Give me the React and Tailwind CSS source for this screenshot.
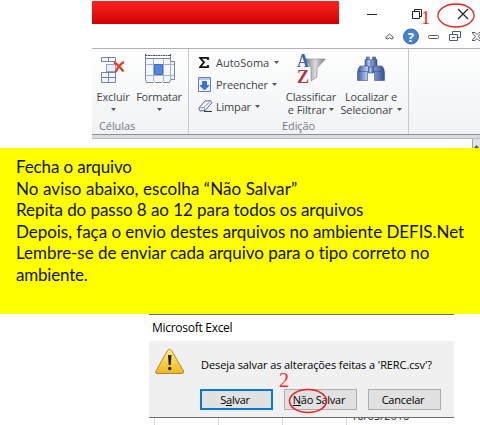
import React from "react";

const ui = "font-['Open_Sans','Noto_Sans',sans-serif]";

function Arrow({ className = "" }) {
  return (
    <svg className={`shrink-0 ${className}`} width="5" height="3" viewBox="0 0 5 3">
      <path d="M0 0h5L2.5 3z" fill="#555" />
    </svg>
  );
}

function DeleteCells() {
  return (
    <svg width="24" height="28" viewBox="0 0 24 28" fill="#f4f7fc" stroke="#7383a3">
      <path d="M.5 5.500V1.500h14v4zM7.500 1.500v4" />
      <path d="M5.500 8.500h9v7h-9z" fill="#e6effb" stroke="#3c4f91" strokeDasharray="1 1" />
      <path d="M.5 16.500h14v10H.5zM7.500 16.500v10M.5 21.500h14" />
      <path d="M13 6c3 2 6 5 9.500 9.500M23 6c-4 2-6 5-8.500 10" fill="none" stroke="#e83b22" strokeWidth="2.200" />
    </svg>
  );
}

function FormatCells() {
  return (
    <svg width="31" height="31" viewBox="0 0 31 31" fill="#f3f6fb" stroke="#7686a8">
      <path d="M1.500 1.500h25M1.500 0v4M26.500 0v4" fill="none" stroke="#465681" strokeDasharray="2 .5" />
      <path d="M1.500 4.500h25v3h4v18h-4l-1 3h-6l-1-1-1 1h-6l-1-1-1 1h-7l-1-3z" />
      <path d="M9.500 5v22M19.500 5v22M26.500 8v18M1 10.500h29M1 21.500h29" stroke="#a5b1c8" />
      <path d="M10.500 10.500h8v10h-8z" fill="#5785dc" stroke="#3f6ac4" />
    </svg>
  );
}

function FillDown() {
  return (
    <svg width="13" height="15" viewBox="0 0 13 15">
      <path d="M.5.5h12v14H.5z" fill="#edf4ff" stroke="#6680b2" />
      <path d="M1 1h11v2H1z" fill="#b9c9e5" />
      <path d="M4.500 4.500h4v4h2.500L6.500 13 2 8.500h2.500z" fill="#3476db" stroke="#2354a6" strokeWidth=".7" />
    </svg>
  );
}

function Eraser() {
  return (
    <svg width="15" height="12" viewBox="0 0 15 12">
      <path d="M.8 8L7 1l5.500-.3 1.500 2L7 10.500l-5 .5z" fill="#f6f8fd" stroke="#59698d" />
      <path d="M1 7.800l5-.3L12.500 1M6 7.500l1 3" fill="none" stroke="#7f8dac" />
      <path d="M6 11.400h8" stroke="#222" />
    </svg>
  );
}

function SortFilter() {
  return (
    <svg width="29" height="31" viewBox="0 0 29 31">
      <defs>
        <linearGradient id="funnel">
          <stop stopColor="#777" />
          <stop offset=".5" stopColor="#ddd" />
          <stop offset="1" stopColor="#777" />
        </linearGradient>
      </defs>
      <path d="M8 5h20.500l-8.500 9v9l-6 4V14z" fill="url(#funnel)" stroke="#888" strokeWidth=".6" />
      <g fontFamily="Liberation Serif, serif" fontWeight="bold" fontSize="19">
        <text x="0" y="13" textLength="12" lengthAdjust="spacingAndGlyphs" fill="#3567b7">A</text>
        <text x="0" y="28.500" textLength="12" lengthAdjust="spacingAndGlyphs" fill="#b3373b">Z</text>
      </g>
    </svg>
  );
}

function Binoculars() {
  return (
    <svg width="28" height="26" viewBox="0 0 28 26">
      <defs>
        <linearGradient id="barrel">
          <stop stopColor="#3d5f9f" />
          <stop offset=".35" stopColor="#b4ccf1" />
          <stop offset="1" stopColor="#31508e" />
        </linearGradient>
      </defs>
      <g fill="url(#barrel)" stroke="#3b5790" strokeWidth=".6">
        <path d="M9.500 1h3v3h-3zM15.500 1h3v3h-3z" />
        <path d="M8 3.500h5.500v7H8zM14.500 3.500H20v7h-5.500z" />
        <path d="M1 13l2-3h8l1.500 3v3H1zM15.500 13l1.500-3h8l2 3v3H15.500z" />
        <path d="M.5 15.500H10.500v9H.5zM17.500 15.500h10v9h-10z" />
        <path d="M11.500 11h5v6h-5z" />
      </g>
    </svg>
  );
}

function Titlebar() {
  return (
    <header className="relative flex h-[48px] pl-[92px]">
      <div className="mt-px h-[23px] w-[247px] bg-linear-to-b from-[#ff2020] to-[#d00000]" />
      <svg width="141" height="48" viewBox="339 0 141 48" fill="none" stroke="#222">
        <path d="M367 14.500h10" />
        <path d="M412.500 11.500h7v7h-7zM414.500 11v-1.500h7v7H420" />
        <path d="M458 9l10 10M468 9l-10 10" strokeWidth="1.200" />
        <path d="M386 37l3.500-3 3.500 3v1.500l-2 .5-1.500-1.500L388 39l-2-.5z" stroke="#555c66" />
        <circle cx="411" cy="36.500" r="7.500" fill="#4681cf" stroke="#3269b4" />
        <rect x="428.500" y="35.500" width="10" height="3" rx="1" stroke="#555c66" />
        <path d="M449.500 34.500h8v6h-8zM452.500 34v-2.500h8v6H458M452 37.500h3" stroke="#555c66" />
        <path d="M472 32.500h3l2 2 2-2h3M472 40.500h3l2-2 2 2h3M472.500 33l3 3.500-3 3.500M481 33l-2.500 3.500 2.500 3.500" stroke="#555c66" />
        <ellipse cx="456" cy="15.500" rx="18" ry="11.500" stroke="#f31b1b" strokeWidth="1.300" />
        <text x="407.700" y="41.500" fill="#fff" stroke="none" fontFamily="Open Sans, sans-serif" fontWeight="bold" fontSize="13">?</text>
      </svg>
      <span className="absolute left-[421px] top-[7px] font-['Liberation_Serif',serif] text-[19px] leading-[22px] text-[#f22]">1</span>
    </header>
  );
}

function Ribbon() {
  return (
    <section className={`ml-[92px] flex h-[91px] border-t border-[#b0b0b2] bg-linear-to-b from-white to-[#eff1f4] text-[11px] leading-[13px] tracking-[-0.1px] text-[#444] ${ui}`}>
      <div className="flex h-[85px] w-[97px] shrink-0 flex-col border-r border-[#c5c8ce]">
        <div className="flex h-[70px]">
          <div className="flex w-[42px] flex-col items-center pt-[7px]">
            <div className="h-[34px]"><DeleteCells /></div>
            <span>Excluir</span>
            <Arrow className="mt-[5px]" />
          </div>
          <div className="flex w-[50px] flex-col items-center pt-[5px]">
            <div className="h-[36px]"><FormatCells /></div>
            <span className="tracking-[-0.25px]">Formatar</span>
            <Arrow className="mt-[5px]" />
          </div>
        </div>
        <span className="pl-[7px] text-[#717985]">Células</span>
      </div>
      <div className="flex h-[85px] w-[220px] shrink-0 flex-col border-r border-[#c5c8ce]">
        <div className="flex h-[70px]">
          <div className="flex w-[91px] shrink-0 flex-col pl-[9px] pt-[2px] tracking-normal">
            <div className="flex h-[22px] items-center">
              <svg className="ml-px mr-[7px] shrink-0" width="10" height="11" viewBox="0 0 10 11">
                <path d="M9 3V.8H1L5 5.300 1 10.200h8V8" fill="none" stroke="#111" strokeWidth="1.800" />
              </svg>
              <span className="whitespace-nowrap">AutoSoma</span>
              <Arrow className="ml-[5px]" />
            </div>
            <div className="flex h-[22px] items-center">
              <div className="mr-[5px] shrink-0"><FillDown /></div>
              <span className="tracking-[-0.1px]">Preencher</span>
              <Arrow className="ml-[4px]" />
            </div>
            <div className="flex h-[22px] items-center">
              <div className="mr-[3px] shrink-0"><Eraser /></div>
              <span className="tracking-[-0.2px]">Limpar</span>
              <Arrow className="ml-[4px]" />
            </div>
          </div>
          <div className="flex w-[62px] shrink-0 flex-col items-center pt-[5px]">
            <div className="h-[36px]"><SortFilter /></div>
            <span>Classificar</span>
            <span className="flex items-center gap-[3px] whitespace-nowrap">e Filtrar <Arrow /></span>
          </div>
          <div className="flex w-[58px] shrink-0 flex-col items-center pt-[7px]">
            <div className="h-[34px]"><Binoculars /></div>
            <span className="whitespace-nowrap tracking-[-0.2px]">Localizar e</span>
            <span className="flex items-center gap-[4px] whitespace-nowrap">Selecionar <Arrow /></span>
          </div>
        </div>
        <span className="pl-[93px] text-[#717985]">Edição</span>
      </div>
      <div className="h-[85px] flex-1" />
    </section>
  );
}

function Dialog() {
  return (
    <section className={`ml-[149px] h-[104px] w-[305px] border-b border-t border-[#6e6e6e] bg-[#f0f0f0] text-black ${ui}`}>
      <div className="h-[26px] bg-white pl-[3px] text-[12px] leading-[25px] tracking-[-0.28px]">Microsoft Excel</div>
      <div className="flex h-[48px] pl-[6px] pt-[7px]">
        <svg width="30" height="27" viewBox="0 0 30 27">
          <defs>
            <linearGradient id="warn" x2="0" y2="1">
              <stop stopColor="#fff078" />
              <stop offset="1" stopColor="#f0b71e" />
            </linearGradient>
          </defs>
          <path d="M12.500 2.500Q14.500-.5 16.500 2.500L28.500 23Q29 25.500 27 25.500H2Q.2 25.500 1 23z" fill="url(#warn)" stroke="#a58a3c" />
          <path d="M13 7h3.500l-.8 10h-2z" fill="#222" />
          <circle cx="14.700" cy="20.500" r="1.700" fill="#222" />
        </svg>
        <span className="ml-[16px] whitespace-nowrap text-[11px] leading-[33px] tracking-[-0.09px]">Deseja salvar as alterações feitas a &apos;RERC.csv&apos;?</span>
      </div>
      <div className="flex gap-[11px] pl-[51px] text-[11px] tracking-[-0.25px]">
        <button className="h-[21px] w-[73px] border-2 border-[#0878d7] bg-[#e1e1e1] pr-[3px] leading-[16px]">S<u>a</u>lvar</button>
        <button className="h-[21px] w-[73px] border border-[#adadad] bg-[#e1e1e1] pr-[3px] leading-[18px]"><u>N</u>ão Salvar</button>
        <button className="h-[21px] w-[73px] border border-[#adadad] bg-[#e1e1e1] pr-[3px] leading-[18px]">Cancelar</button>
      </div>
    </section>
  );
}

export default function App() {
  return (
    <main className="relative h-[425px] w-[480px] overflow-hidden bg-white">
      <Titlebar />
      <Ribbon />
      <div className="-mt-[5px] ml-[92px] h-[5px] border-b border-t border-b-[#b9bdc4] border-t-[#8c9097] bg-[#d8dbe0]" />
      <div className="flex h-[9px] justify-end pl-[92px]">
        <div className="flex w-[8px] items-end justify-center border-l border-[#a0a4aa] bg-[#dfe2e7]"><Arrow className="rotate-180" /></div>
      </div>
      <section className="h-[166px] bg-[#ff0] pl-[16px] pt-[8px] font-[Lato,sans-serif] text-[17px] leading-[21.6px] text-[#111100]">
        <p className="whitespace-nowrap tracking-[-0.13px]">Fecha o arquivo</p>
        <p className="whitespace-nowrap tracking-[0.08px]">No aviso abaixo, escolha “Não Salvar”</p>
        <p className="whitespace-nowrap tracking-[-0.06px]">Repita do passo 8 ao 12 para todos os arquivos</p>
        <p className="whitespace-nowrap tracking-[-0.035px]">Depois, faça o envio destes arquivos no ambiente DEFIS.Net</p>
        <p className="whitespace-nowrap tracking-[-0.05px]">Lembre-se de enviar cada arquivo para o tipo correto no</p>
        <p className="whitespace-nowrap tracking-[-0.2px]">ambiente.</p>
      </section>
      <Dialog />
      <div className="ml-[154px] flex h-[7px] overflow-hidden">
        <div className="w-[64px] border-l border-[#d4d4d4]" />
        <div className="w-[64px] border-l border-[#d4d4d4]" />
        <div className="w-[64px] border-l border-[#d4d4d4]" />
        <div className={`h-[7px] border-l border-[#d4d4d4] pl-[4px] text-[11px] text-[#222] ${ui}`}>
          <div className="-mt-[10px] leading-[16px]">16/03/2016</div>
        </div>
      </div>
      <span className="absolute left-[279px] top-[369px] font-['Liberation_Serif',serif] text-[20px] leading-[22px] text-[#f22]">2</span>
      <svg className="absolute left-[288px] top-[388px]" width="40" height="26">
        <ellipse cx="20" cy="13" rx="18.500" ry="11.500" fill="none" stroke="#f31b1b" strokeWidth="1.500" />
      </svg>
    </main>
  );
}
